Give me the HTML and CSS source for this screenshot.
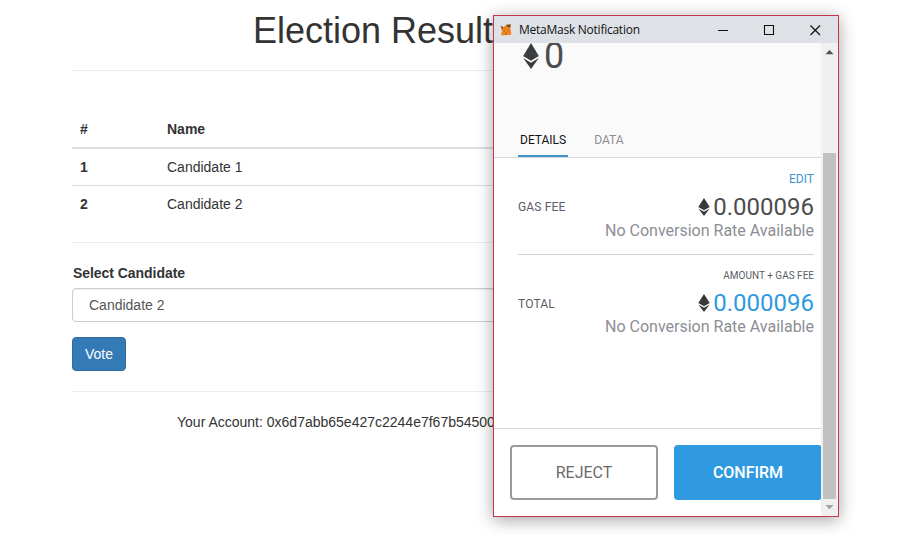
FILE: index.html
```
<!DOCTYPE html>
<html lang="en">
<head>
<meta charset="utf-8">
<title>Election Results</title>
<link rel="stylesheet" href="styles.css">
</head>
<body>
<main class="page">
  <h1 class="title">Election Result</h1>
  <hr class="rule">
  <table class="results">
    <thead><tr><th class="num">#</th><th>Name</th></tr></thead>
    <tbody>
      <tr><th>1</th><td>Candidate 1</td></tr>
      <tr><th>2</th><td>Candidate 2</td></tr>
    </tbody>
  </table>
  <hr class="rule">
  <div class="label">Select Candidate</div>
  <div class="select">Candidate 2</div>
  <button class="vote">Vote</button>
  <hr class="rule">
  <p class="account">Your Account: 0x6d7abb65e427c2244e7f67b54500</p>
</main>

<section class="window">
  <header class="titlebar">
    <svg class="fox" viewBox="0 0 12 12"><path fill="#ee8322" d="M.6 1.500 3.200 3.300 7 .400 11 .600 10.300 4.500 11.300 9.500 10.500 11.300 7 10.500 3.500 11.500 1 10.800 2 7.500z"/><path fill="#7a4a2c" d="M6.200.800 10.800.600 10 3.600 7.600 3zM.6 1.500 3.600 3.700 2.200 5.300z"/><path fill="#b85a1c" d="M3.800 6.200 5.400 7.200 4.200 7.800zM9.400 5.600 7.800 7 9.200 7.200zM5.200 9.600h2.400l-.4 1.200-1.800.1z"/></svg>
    <span class="caption">MetaMask Notification</span>
    <svg class="controls" viewBox="0 0 103 12" fill="none" stroke="#111"><path d="M0 6.500h10M46.500 1.500h9v9h-9z" stroke-width="1.100"/><path d="M92.500 1.500l9.500 9.500M102 1.500 92.500 11" stroke-width="1.200"/></svg>
  </header>
  <div class="view">
    <div class="content">
      <div class="summary">
        <div class="amount"><svg class="eth-lg" viewBox="0 0 16 26"><path fill="#393c3f" d="M8 0 15.800 13 8 17.700.200 13zM.200 15 8 19.700 15.800 15 8 26z"/><path stroke="#55585c" stroke-width=".5" fill="none" d="M.6 13 8 9.700l7.400 3.300"/></svg><span>0</span></div>
        <nav class="tabs"><span class="tab active">DETAILS</span><span class="tab">DATA</span></nav>
      </div>
      <div class="details">
        <div class="fee gas">
          <span class="name">GAS FEE</span>
          <div class="values">
            <div class="edit">EDIT</div>
            <div class="value"><svg class="eth" viewBox="0 0 12 18"><path fill="#37393b" d="M6 0 11.700 9 6 12.300.300 9zM.300 10.500 6 13.800 11.700 10.500 6 18z"/></svg><span>0.000096</span></div>
            <div class="rate">No Conversion Rate Available</div>
          </div>
        </div>
        <div class="fee total">
          <span class="name">TOTAL</span>
          <div class="values">
            <div class="sum">AMOUNT + GAS FEE</div>
            <div class="value blue"><svg class="eth" viewBox="0 0 12 18"><path fill="#37393b" d="M6 0 11.700 9 6 12.300.300 9zM.300 10.500 6 13.800 11.700 10.500 6 18z"/></svg><span>0.000096</span></div>
            <div class="rate">No Conversion Rate Available</div>
          </div>
        </div>
      </div>
      <footer class="actions"><button class="reject">REJECT</button><button class="confirm">CONFIRM</button></footer>
    </div>
    <div class="scrollbar">
      <svg class="arrow" viewBox="0 0 17 17"><path fill="#505050" d="M4.500 11.200h8L8.500 7z"/></svg>
      <div class="thumb"></div>
      <svg class="arrow" viewBox="0 0 17 17"><path fill="#a0a0a0" d="M4.500 6h8l-4 4.200z"/></svg>
    </div>
  </div>
</section>
</body>
</html>
```
FILE: styles.css
```
* { box-sizing: border-box; }
body {
  margin: 0;
  height: 535px;
  overflow: hidden;
  background: #fff;
  color: #333;
  font: 14px/20px "Liberation Sans", Arial, sans-serif;
}
.page { width: 606px; margin-left: 72px; padding-top: 11px; }
.title { margin: 0; padding-left: 181px; font-size: 36px; font-weight: 400; line-height: 39px; }
.rule { margin: 20px 0; border: 0; border-top: 1px solid #eee; }
.results { width: 100%; margin-top: 40px; border-collapse: separate; border-spacing: 0; }
.results th, .results td { height: 37px; padding: 8px; text-align: left; border-top: 1px solid #ddd; }
.results tbody tr:first-child > * { height: 36px; border-top: 0; }
.results thead th { height: 38px; border-top: 0; border-bottom: 2px solid #ddd; }
.results .num { width: 87px; }
.label { font-weight: 700; margin-bottom: 5px; padding-left: 1px; letter-spacing: -.05px; }
.select { height: 34px; padding: 6px 16px; border: 1px solid #ccc; border-radius: 4px; color: #555; box-shadow: inset 0 1px 1px rgba(0,0,0,.075); }
.vote { display: block; width: 54px; height: 34px; margin-top: 15px; padding: 0; border: 1px solid #2e6da4; border-radius: 4px; background: #337ab7; color: #fff; font: inherit; }
.account { margin: 0; padding-left: 105px; white-space: nowrap; }

.window {
  position: absolute;
  left: 493px;
  top: 15px;
  width: 346px;
  height: 502px;
  border: 1px solid #c7364a;
  background: #fff;
  box-shadow: 0 3px 16px rgba(0,0,0,.36);
  font-family: Roboto, sans-serif;
}
.titlebar { display: flex; align-items: center; height: 27px; padding: 0 17px 0 6px; background: #dee1e6; color: #111; }
.fox { width: 12px; height: 12px; }
.caption { margin-left: 7px; font: 12px/16px "Open Sans", "Noto Sans", sans-serif; letter-spacing: -.25px; }
.controls { width: 103px; height: 12px; margin-left: auto; }
.view { display: flex; height: 473px; }
.content { width: 327px; display: flex; flex-direction: column; overflow: hidden; }
.summary { height: 115px; display: flex; flex-direction: column; justify-content: space-between; background: #fafafa; border-bottom: 1px solid #d2d8dd; }
.amount { display: flex; align-items: center; height: 26px; padding-left: 29px; color: #4d4d4d; font-size: 36px; line-height: 26px; }
.eth-lg { width: 16px; height: 26px; margin-right: 5px; }
.tabs { display: flex; gap: 24px; padding-left: 24px; }
.tab { height: 27px; padding: 1px 2px 0; color: #8c8e94; font-size: 12px; line-height: 18px; }
.tab.active { color: #111; border-bottom: 2px solid #4093cc; }
.details { flex: 1; padding: 0 7px 0 24px; }
.fee { display: flex; justify-content: space-between; height: 97px; padding-top: 12px; }
.gas { border-bottom: 1px solid #d2d2d2; }
.name { margin-top: 29px; color: #5b5d67; font-size: 12px; letter-spacing: .15px; line-height: 16px; }
.values { text-align: right; }
.edit { color: #3f93cd; font-size: 12px; line-height: 18px; margin-bottom: 6px; }
.value { display: flex; justify-content: flex-end; align-items: center; gap: 3px; height: 26px; color: #4d4d4d; font-size: 24px; line-height: 26px; }
.value.blue { color: #2f9ae0; }
.eth { width: 12px; height: 18px; }
.rate { color: #8c8e94; font-size: 16px; line-height: 21px; }
.sum { color: #5b5d67; font-size: 10px; line-height: 16px; padding-top: 1px; margin-bottom: 6px; }
.actions { display: flex; gap: 16px; height: 88px; padding: 16px 0 0 16px; border-top: 1px solid #d2d8dd; }
.actions button { flex: none; width: 148px; height: 55px; padding: 0; border-radius: 4px; font: 16px/20px Roboto, sans-serif; }
.reject { border: 2px solid #9b9b9b; background: #fff; color: #6b6b6b; }
.confirm { border: 0; background: #2f9ae0; color: #fff; }
.actions .confirm { font-weight: 500; }
.scrollbar { width: 17px; display: flex; flex-direction: column; background: #f0f0f0; }
.arrow { width: 17px; height: 17px; }
.thumb { width: 13px; height: 346px; margin: 93px 0 0 2px; background: #c1c1c1; }
```
